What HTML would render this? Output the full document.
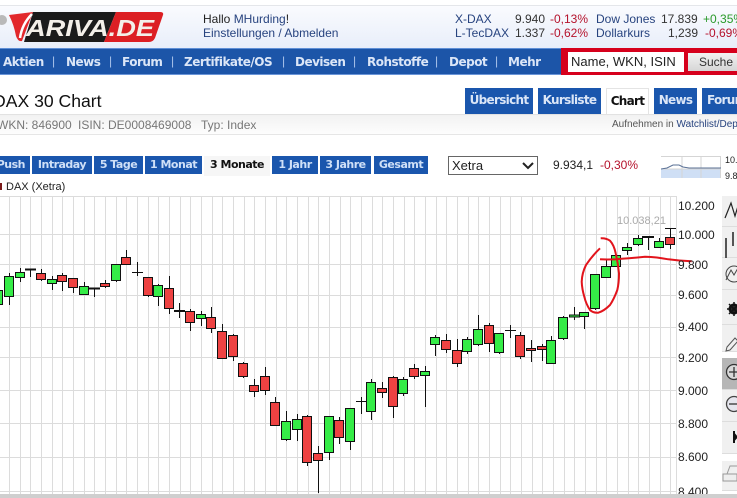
<!DOCTYPE html>
<html><head><meta charset="utf-8"><style>
html,body{margin:0;padding:0;background:#fff}
#p{position:relative;width:737px;height:498px;overflow:hidden;font-family:"Liberation Sans",Arial,sans-serif;font-size:12px;color:#222}
#p div,#p span.a{position:absolute;white-space:nowrap}
.n{top:54px;font:bold 12px "DejaVu Sans",sans-serif;letter-spacing:-.5px;color:#dbe6f7;line-height:16px}
.s{top:53px;font:12px "Liberation Sans",sans-serif;color:#a9c3ea;line-height:16px}
.t{top:88px;height:26px;background:#1a56ad;color:#dbe6f7;font:bold 12px/25px "DejaVu Sans",sans-serif;letter-spacing:-.7px;text-align:center}
.b{top:156px;height:18px;background:#1a56ad;color:#cfe0f7;font:bold 11px/18px "DejaVu Sans",sans-serif;letter-spacing:-.5px;text-align:center}
.l{left:678px;font-size:12px;line-height:14px;color:#222}
.r1{top:12px;line-height:14px}.r2{top:26px;line-height:14px}
.lk{color:#27437f}.red{color:#b5122c}
.p{left:722px;width:30px;background:#f0f0f0;border-bottom:1px solid #ddd;box-sizing:border-box}
</style></head><body><div id="p">
<!-- header -->
<div style="left:0;top:5px;width:737px;height:43px;background:linear-gradient(#fafbfe,#e8eefa);border-top:1px solid #e4e6ea;box-sizing:border-box"></div>
<svg style="position:absolute;left:0;top:8px" width="170" height="38" viewBox="0 8 170 38">
<circle cx="2" cy="20" r="5" fill="#b9b9b9"/>
<path d="M9 15L33 12L22 41Q18 42 16 36Q14 25 9 15Z" fill="#e2282c"/>
<path d="M33 12H116L104 42H24Z" fill="#1b1b1b"/>
<path d="M116 12H160Q164 12 163 15L155 38Q153 42 149 42H104Z" fill="#dc1f24"/>
<path d="M32 14Q22 24 20 38" stroke="#fff" stroke-width="2.5" fill="none"/>
<text x="26" y="36" font-family="Liberation Sans" font-weight="bold" font-style="italic" font-size="23" fill="#f3efe9" textLength="128" lengthAdjust="spacingAndGlyphs">ARIVA.DE</text>
</svg>
<div class="r1" style="left:203px">Hallo <span class="lk">MHurding</span>!</div>
<div class="r2 lk" style="left:203px;top:26px">Einstellungen / Abmelden</div>
<div class="r1 lk" style="left:455px">X-DAX</div><div class="r1" style="left:515px;color:#333">9.940</div><div class="r1 red" style="left:550px">-0,13%</div>
<div class="r1 lk" style="left:596px">Dow Jones</div><div class="r1" style="left:661px;color:#333">17.839</div><div class="r1" style="left:703px;color:#2a9a2a">+0,35%</div>
<div class="r2 lk" style="left:455px">L-TecDAX</div><div class="r2" style="left:515px;color:#333">1.337</div><div class="r2 red" style="left:550px">-0,62%</div>
<div class="r2 lk" style="left:596px">Dollarkurs</div><div class="r2" style="left:668px;color:#333">1,239</div><div class="r2 red" style="left:705px">-0,69%</div>
<!-- nav -->
<div style="left:0;top:48px;width:737px;height:27px;background:#1c55a8;border-top:1px solid #5f8fd6;border-bottom:1px solid #6a95d8;box-sizing:border-box"></div>
<div class="n" style="left:3px">Aktien</div><div class="s" style="left:52px">|</div>
<div class="n" style="left:66px">News</div><div class="s" style="left:109px">|</div>
<div class="n" style="left:122px">Forum</div><div class="s" style="left:171px">|</div>
<div class="n" style="left:184px">Zertifikate/OS</div><div class="s" style="left:282px">|</div>
<div class="n" style="left:295px">Devisen</div><div class="s" style="left:353px">|</div>
<div class="n" style="left:367px">Rohstoffe</div><div class="s" style="left:435px">|</div>
<div class="n" style="left:449px">Depot</div><div class="s" style="left:495px">|</div>
<div class="n" style="left:508px">Mehr</div>
<div style="left:561px;top:48px;width:176px;height:27px;background:#d6001c"></div>
<div style="left:568px;top:52px;width:116px;height:20px;background:#fff;font-size:13px;line-height:20px;text-indent:3px;color:#222">Name, WKN, ISIN</div>
<div style="left:688px;top:53px;width:60px;height:18px;background:linear-gradient(#f2f2f2,#d6d6d6);font-size:12px;line-height:18px;text-indent:11px;color:#333">Suche</div>
<!-- title -->
<div style="left:-7px;top:90px;font-size:17.6px;line-height:22px;color:#111">DAX 30 Chart</div>
<div class="t" style="left:465px;width:68px">Übersicht</div>
<div class="t" style="left:538px;width:63px">Kursliste</div>
<div class="t" style="left:606px;width:43px;background:#fff;color:#111;border:1px solid #e4e4e4;border-bottom:0;box-sizing:border-box">Chart</div>
<div class="t" style="left:654px;width:43px">News</div>
<div class="t" style="left:702px;width:50px;text-align:left;text-indent:5px">Forum</div>
<div style="left:0;top:114px;width:737px;height:21px;background:linear-gradient(#f2f2f2,#fdfdfd);border-top:1px solid #e2e2e2;border-bottom:1px solid #e6e6e6;box-sizing:border-box"></div>
<div style="left:-3px;top:118px;color:#777;line-height:14px">WKN: 846900</div>
<div style="left:78px;top:118px;color:#777;line-height:14px">ISIN: DE0008469008</div>
<div style="left:201px;top:118px;color:#777;line-height:14px">Typ: Index</div>
<div style="left:612px;top:119px;font-size:10px;line-height:12px;color:#555">Aufnehmen in <span class="lk">Watchlist/Depot</span></div>
<!-- period -->
<div class="b" style="left:-10px;width:40px;text-align:right;padding-right:5px;box-sizing:border-box">Push</div>
<div class="b" style="left:32px;width:60px">Intraday</div>
<div class="b" style="left:94px;width:49px">5 Tage</div>
<div class="b" style="left:145px;width:57px">1 Monat</div>
<div class="b" style="left:204px;width:66px;height:20px;background:#f6f6f6;color:#111">3 Monate</div>
<div class="b" style="left:272px;width:46px">1 Jahr</div>
<div class="b" style="left:320px;width:51px">3 Jahre</div>
<div class="b" style="left:374px;width:54px">Gesamt</div>
<div style="left:448px;top:156px;width:90px;height:19px;border:1px solid #666;box-sizing:border-box;font-size:13px;line-height:18px;text-indent:3px;color:#222">Xetra
<svg style="position:absolute;left:73px;top:4px" width="12" height="9"><path d="M1 2L6 7L11 2" stroke="#222" stroke-width="2" fill="none"/></svg></div>
<div style="left:553px;top:158px;line-height:14px;color:#222">9.934,1</div>
<div class="red" style="left:600px;top:158px;line-height:14px">-0,30%</div>
<svg style="position:absolute;left:661px;top:156px" width="60" height="23"><rect width="60" height="22" fill="#fff"/><rect y="13" width="60" height="9" fill="#cfdff5"/><path d="M0 .5H60M0 13H60M21 0V22M40 0V22M59.5 0V22" stroke="#d5d5d5" fill="none"/><path d="M0 13L6 12L12 9L18 9L22 11L28 12H60" stroke="#5a7196" fill="none"/></svg>
<div style="left:725px;top:154px;font-size:9px;line-height:12px">10.</div>
<div style="left:725px;top:170px;font-size:9px;line-height:12px">9.8</div>
<div style="left:-1px;top:183px;width:3px;height:7px;background:#7a1a1a"></div>
<div style="left:6px;top:180px;font-size:11px;line-height:14px;color:#222">DAX (Xetra)</div>
<!-- chart -->
<svg style="position:absolute;left:0;top:0" width="737" height="498">
<path fill="none" stroke="#dcdcdc" d="M9.5 196V494M20.5 196V494M30.5 196V494M41.5 196V494M52.5 196V494M62.5 196V494M73.5 196V494M84.5 196V494M94.5 196V494M105.5 196V494M116.5 196V494M126.5 196V494M137.5 196V494M148.5 196V494M158.5 196V494M169.5 196V494M180.5 196V494M190.5 196V494M201.5 196V494M212.5 196V494M222.5 196V494M233.5 196V494M244.5 196V494M254.5 196V494M265.5 196V494M276.5 196V494M286.5 196V494M297.5 196V494M308.5 196V494M318.5 196V494M329.5 196V494M340.5 196V494M350.5 196V494M361.5 196V494M372.5 196V494M382.5 196V494M393.5 196V494M404.5 196V494M414.5 196V494M425.5 196V494M436.5 196V494M446.5 196V494M457.5 196V494M468.5 196V494M478.5 196V494M489.5 196V494M500.5 196V494M510.5 196V494M521.5 196V494M532.5 196V494M542.5 196V494M553.5 196V494M564.5 196V494M574.5 196V494M585.5 196V494M596.5 196V494M606.5 196V494M617.5 196V494M628.5 196V494M638.5 196V494M649.5 196V494M660.5 196V494M670.5 196V494M676.5 196V494M0 196.5H676M0 234.5H676M0 264.5H676M0 295.5H676M0 327.5H676M0 357.5H676M0 390.5H676M0 423.5H676M0 457.5H676M0 491.5H676"/>
<path fill="none" stroke="#111" d="M-.5 275V305M9.5 273V305M20.5 268V282M30.5 269V277M41.5 269V281M52.5 276V290M62.5 273V291M73.5 278V293M84.5 282V294M94.5 288V297M105.5 280V288M116.5 264V282M126.5 250V264M137.5 262V276M132 272.5H143M148.5 277V297M158.5 284V306M169.5 276V314M179.5 303V318M190.5 309V331M201.5 311V326M211.5 307V333M222.5 324V358M233.5 334V361M243.5 362V378M254.5 379V397M265.5 367V395M275.5 397V425M286.5 411V441M297.5 414V441M307.5 415V466M318.5 446V493M329.5 416V460M339.5 417V444M350.5 408V450M361.5 397V414M356 401.5H367M371.5 379V420M382.5 382V398M393.5 376V418M403.5 377V396M414.5 364V379M425.5 366V407M435.5 335V356M446.5 334V353M457.5 339V367M467.5 337V354M478.5 315V346M489.5 323V352M499.5 333V354M510.5 325V338M505 330.5H516M520.5 332V359M531.5 340V362M542.5 344V361M551.5 336V363M563.5 316V340M574.5 307V320M584.5 312V329M595.5 274V310M606.5 260V277M616.5 255V267M627.5 243V255M638.5 235V246M648.5 236V250M659.5 238V248M670.5 228V249M665 228.5H676"/>
<path fill="none" stroke="#111" stroke-width="2" d="M25 269.5H36M89 288.5H100M174 311H185M642 237H654"/>
<g stroke="#111" fill="#35ec47">
<rect x="-5.5" y="290.5" width="8" height="14"/><rect x="4.5" y="276.5" width="9" height="20"/><rect x="15.5" y="272.5" width="9" height="5"/><rect x="47.5" y="279.5" width="9" height="4"/><rect x="79.5" y="286.5" width="9" height="8"/><rect x="111.5" y="264.5" width="9" height="16"/><rect x="153.5" y="285.5" width="9" height="11"/><rect x="196.5" y="314.5" width="9" height="4"/><rect x="281.5" y="421.5" width="9" height="18"/><rect x="292.5" y="419.5" width="9" height="10"/><rect x="324.5" y="416.5" width="9" height="36"/><rect x="345.5" y="408.5" width="9" height="33"/><rect x="366.5" y="382.5" width="9" height="29"/><rect x="398.5" y="379.5" width="9" height="14"/><rect x="420.5" y="371.5" width="9" height="4"/><rect x="430.5" y="337.5" width="9" height="7"/><rect x="462.5" y="339.5" width="9" height="12"/><rect x="473.5" y="329.5" width="9" height="15"/><rect x="494.5" y="333.5" width="9" height="19"/><rect x="546.5" y="340.5" width="9" height="23"/><rect x="558.5" y="317.5" width="9" height="21"/><rect x="569.5" y="315" width="10" height="2"/><rect x="579.5" y="312.5" width="9" height="4"/><rect x="590.5" y="274.5" width="9" height="34"/><rect x="601.5" y="266.5" width="9" height="11"/><rect x="611.5" y="255.5" width="9" height="11"/><rect x="622.5" y="247.5" width="9" height="3"/><rect x="633.5" y="238.5" width="9" height="6"/><rect x="654.5" y="241.5" width="9" height="6"/>
</g>
<g stroke="#111" fill="#ee4242">
<rect x="36.5" y="273.5" width="9" height="6"/><rect x="57.5" y="275.5" width="9" height="6"/><rect x="68.5" y="278.5" width="9" height="9"/><rect x="100.5" y="283.5" width="9" height="3"/><rect x="121.5" y="257.5" width="9" height="7"/><rect x="143.5" y="277.5" width="9" height="18"/><rect x="164.5" y="288.5" width="9" height="20"/><rect x="185.5" y="311.5" width="9" height="11"/><rect x="206.5" y="317.5" width="9" height="11"/><rect x="217.5" y="331.5" width="9" height="27"/><rect x="228.5" y="335.5" width="9" height="21"/><rect x="238.5" y="363.5" width="9" height="13"/><rect x="249.5" y="385.5" width="9" height="6"/><rect x="260.5" y="376.5" width="9" height="14"/><rect x="270.5" y="402.5" width="9" height="23"/><rect x="302.5" y="416.5" width="9" height="46"/><rect x="313.5" y="453.5" width="9" height="7"/><rect x="334.5" y="420.5" width="9" height="17"/><rect x="377.5" y="388.5" width="9" height="4"/><rect x="388.5" y="377.5" width="9" height="29"/><rect x="409.5" y="368.5" width="9" height="8"/><rect x="441.5" y="340.5" width="9" height="9"/><rect x="452.5" y="350.5" width="9" height="13"/><rect x="484.5" y="325.5" width="9" height="18"/><rect x="515.5" y="335.5" width="9" height="21"/><rect x="526.5" y="348.5" width="9" height="2"/><rect x="537.5" y="346.5" width="9" height="3"/><rect x="665.5" y="237.5" width="9" height="7"/>
</g>
<path fill="none" stroke="#e2141c" stroke-width="2" d="M600.7 238.3Q606 238 610 240.7Q614 245 615.7 253.3Q618 263 619 273.3Q619 283 617.3 290Q614 299 610 305Q604 311 598.3 312.7Q593 313 590 310Q586 304 584.3 296.7Q582 289 581.7 281.7Q582 273 586 265Q592 256 600 248.3M600 259.3Q610 260 621.7 258.7Q634 258 645 256.7Q657 257 668.3 259.3Q680 261 691.7 261.3"/>
</svg>
<div style="left:617px;top:214px;font-size:11px;line-height:14px;color:#aaa">10.038,21</div>
<div class="l" style="top:199px">10.200</div><div class="l" style="top:228px">10.000</div><div class="l" style="top:258px">9.800</div><div class="l" style="top:288px">9.600</div><div class="l" style="top:320px">9.400</div><div class="l" style="top:351px">9.200</div><div class="l" style="top:384px">9.000</div><div class="l" style="top:417px">8.800</div><div class="l" style="top:450px">8.600</div><div class="l" style="top:485px">8.400</div>
<!-- right panel -->
<div class="p" style="top:196px;height:31px"></div><div class="p" style="top:227px;height:31px"></div><div class="p" style="top:258px;height:32px"></div><div class="p" style="top:290px;height:35px"></div><div class="p" style="top:325px;height:27px"></div>
<div class="p" style="top:358px;height:32px;background:#b6b6b6"></div><div class="p" style="top:390px;height:32px"></div><div class="p" style="top:422px;height:32px"></div>
<div class="p" style="top:461px;height:30px"></div>
<svg style="position:absolute;left:722px;top:196px" width="15" height="300">
<path fill="none" stroke="#222" stroke-width="1.2" d="M3 22L9 7L13 20L16 10"/>
<path fill="none" stroke="#555" stroke-width="2" d="M4 42V62M11 36V50"/>
<circle cx="12" cy="78" r="8" fill="none" stroke="#444"/><path d="M4 84L9 74L12 79L16 72" fill="none" stroke="#444"/>
<circle cx="12" cy="113" r="4" fill="none" stroke="#111" stroke-width="3"/><path d="M12 106V120M5 113H19M7 108L17 118M17 108L7 118" stroke="#111" stroke-width="1.5"/>
<path d="M5 151L13 142L16 145L8 154L4 155Z" fill="none" stroke="#555"/>
<circle cx="12" cy="176" r="7.5" fill="#d8d8d8" stroke="#333" stroke-width="1.3"/><path d="M7 176H15M12 171V181" stroke="#333" stroke-width="1.3"/>
<circle cx="12" cy="208" r="7.5" fill="#e6e6ee" stroke="#444" stroke-width="1.3"/><path d="M7 208H15" stroke="#333" stroke-width="1.3"/>
<path d="M11 235L16 241L11 247Z" fill="#111"/><path d="M12 235V247" stroke="#111" stroke-width="2"/>
<path d="M1 278H15V285H1ZM5 278L8 270H15" fill="#eee" stroke="#999"/>
</svg>
<div style="left:0;top:494px;width:737px;height:4px;background:#cfcfcf"></div>
</div></body></html>
